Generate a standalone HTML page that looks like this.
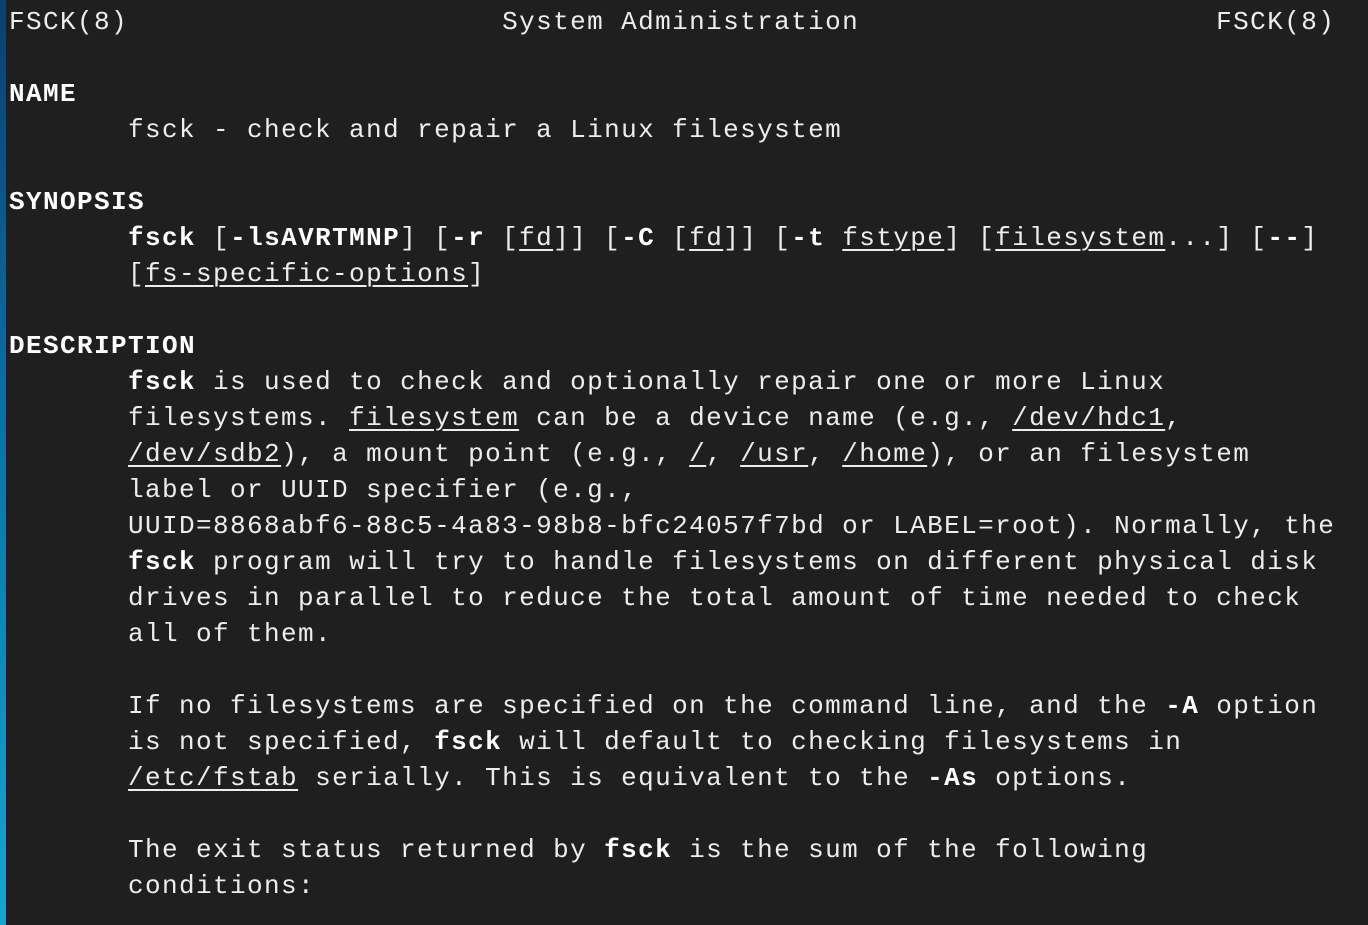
<!DOCTYPE html>
<html><head><meta charset="utf-8"><style>
html,body{margin:0;padding:0;background:#1f1f1f;width:1368px;height:925px;overflow:hidden}
.strip{position:absolute;left:0;top:0;width:6px;height:925px;background:linear-gradient(#0b3f6e,#0f6aa0 40%,#1aa3cf 100%)}
pre{position:absolute;left:9px;top:4px;margin:0;font-family:"Liberation Mono",monospace;font-size:26px;letter-spacing:1.4px;line-height:36px;color:#ededed;white-space:pre}
b{font-weight:bold;color:#fff}
u{text-decoration:underline;text-underline-offset:4px;text-decoration-thickness:2px}
</style></head><body><div class="strip"></div><pre>FSCK(8)                      System Administration                     FSCK(8)

<b>NAME</b>
       fsck - check and repair a Linux filesystem

<b>SYNOPSIS</b>
       <b>fsck</b> [<b>-lsAVRTMNP</b>] [<b>-r</b> [<u>fd</u>]] [<b>-C</b> [<u>fd</u>]] [<b>-t</b> <u>fstype</u>] [<u>filesystem</u>...] [<b>--</b>]
       [<u>fs-specific-options</u>]

<b>DESCRIPTION</b>
       <b>fsck</b> is used to check and optionally repair one or more Linux
       filesystems. <u>filesystem</u> can be a device name (e.g., <u>/dev/hdc1</u>,
       <u>/dev/sdb2</u>), a mount point (e.g., <u>/</u>, <u>/usr</u>, <u>/home</u>), or an filesystem
       label or UUID specifier (e.g.,
       UUID=8868abf6-88c5-4a83-98b8-bfc24057f7bd or LABEL=root). Normally, the
       <b>fsck</b> program will try to handle filesystems on different physical disk
       drives in parallel to reduce the total amount of time needed to check
       all of them.

       If no filesystems are specified on the command line, and the <b>-A</b> option
       is not specified, <b>fsck</b> will default to checking filesystems in
       <u>/etc/fstab</u> serially. This is equivalent to the <b>-As</b> options.

       The exit status returned by <b>fsck</b> is the sum of the following
       conditions:
</pre></body></html>
